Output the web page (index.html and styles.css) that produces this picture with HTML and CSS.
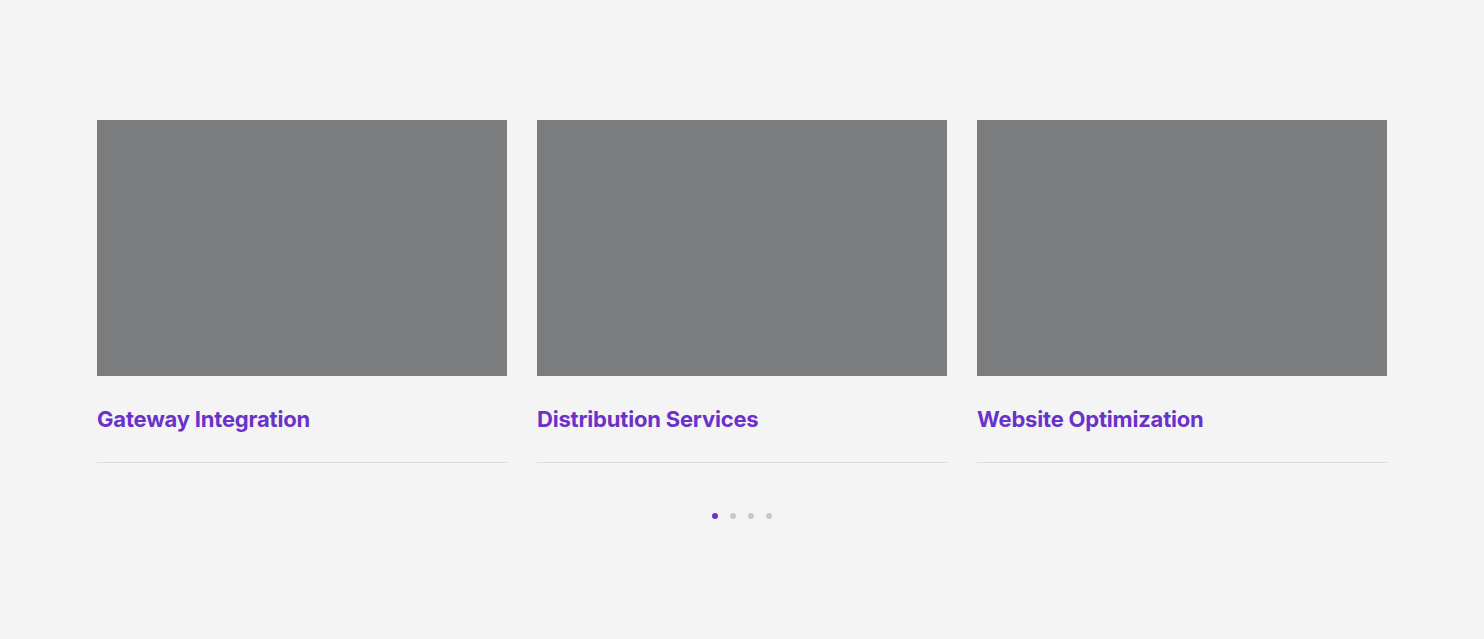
FILE: index.html
```html
<!DOCTYPE html>
<html>
<head>
<meta charset="utf-8">
<link rel="stylesheet" href="styles.css">
</head>
<body>
<section class="services">
  <div class="cards">
    <article class="card">
      <div class="thumb"></div>
      <h3 class="title">Gateway Integration</h3>
    </article>
    <article class="card">
      <div class="thumb"></div>
      <h3 class="title">Distribution Services</h3>
    </article>
    <article class="card">
      <div class="thumb"></div>
      <h3 class="title">Website Optimization</h3>
    </article>
  </div>
  <div class="dots">
    <span class="dot active"></span>
    <span class="dot"></span>
    <span class="dot"></span>
    <span class="dot"></span>
  </div>
</section>
</body>
</html>
```
FILE: styles.css
```css
html, body {
  margin: 0;
  padding: 0;
  background: #f4f4f4;
  font-family: Inter, "Noto Sans", sans-serif;
}
.services {
  width: 1290px;
  margin: 0 auto;
  padding-top: 120px;
}
.cards {
  display: flex;
  gap: 30px;
}
.card {
  width: 410px;
  border-bottom: 1px solid #dcdcdc;
}
.thumb {
  height: 256px;
  background: #7b7c7d;
}
.title {
  margin: 0;
  padding: 28px 0 28px;
  font-size: 22px;
  line-height: 30px;
  font-weight: 700;
  letter-spacing: -0.2px;
  color: #6a32c8;
}
.dots {
  display: flex;
  justify-content: center;
  gap: 12px;
  margin-top: 50px;
}
.dot {
  width: 6px;
  height: 6px;
  border-radius: 50%;
  background: #c8c8c8;
}
.dot.active {
  background: #6a32c8;
}
```
